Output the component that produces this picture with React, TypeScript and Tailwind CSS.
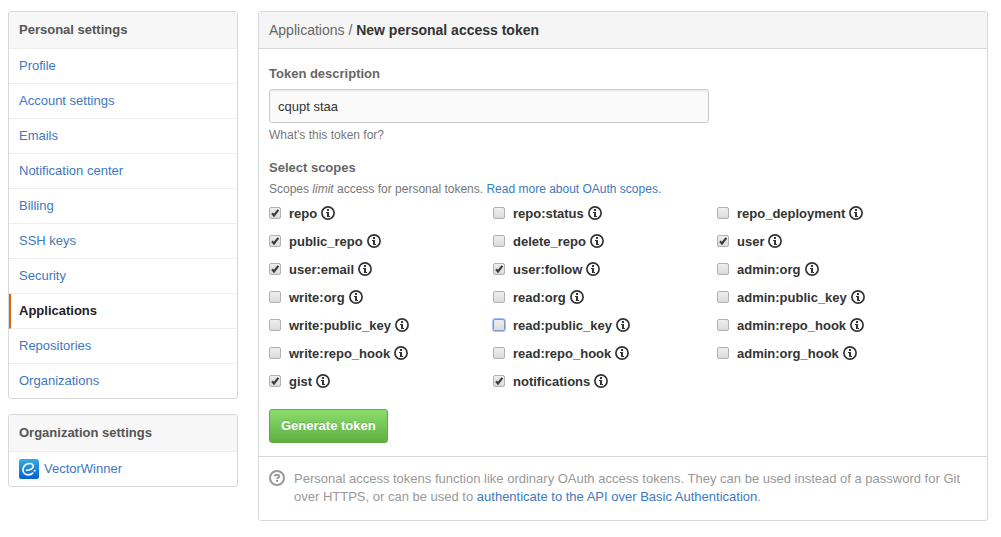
import React from "react";

type Scope = { name: string; checked?: boolean; focused?: boolean };

const scopes: Scope[] = [
  { name: "repo", checked: true },
  { name: "repo:status" },
  { name: "repo_deployment" },
  { name: "public_repo", checked: true },
  { name: "delete_repo" },
  { name: "user", checked: true },
  { name: "user:email", checked: true },
  { name: "user:follow", checked: true },
  { name: "admin:org" },
  { name: "write:org" },
  { name: "read:org" },
  { name: "admin:public_key" },
  { name: "write:public_key" },
  { name: "read:public_key", focused: true },
  { name: "admin:repo_hook" },
  { name: "write:repo_hook" },
  { name: "read:repo_hook" },
  { name: "admin:org_hook" },
  { name: "gist", checked: true },
  { name: "notifications", checked: true },
];

const personalLinks = [
  "Profile",
  "Account settings",
  "Emails",
  "Notification center",
  "Billing",
  "SSH keys",
  "Security",
  "Applications",
  "Repositories",
  "Organizations",
];

function InfoIcon() {
  return (
    <svg viewBox="0 0 14 14" className="size-3.5 shrink-0" aria-hidden="true">
      <circle cx="7" cy="7" r="6.1" fill="none" stroke="#333" strokeWidth="1.7" />
      <path fill="#333" d="M6 3h2v2H6zM5 6h3v4h1v1H6V7H5z" />
    </svg>
  );
}

function HelpIcon() {
  return (
    <svg viewBox="0 0 16 16" className="size-4 shrink-0" aria-hidden="true">
      <circle cx="8" cy="8" r="7" fill="none" stroke="#999" strokeWidth="2" />
      <path
        d="M5.600 6.300C5.800 5.200 6.700 4.800 8 4.800c1.400 0 2.200.6 2.200 1.500 0 1.300-2.100 1.300-2.100 2.700"
        fill="none"
        stroke="#999"
        strokeWidth="2"
      />
      <path fill="#999" d="M7 10h2v2H7z" />
    </svg>
  );
}

function OrgAvatar() {
  return (
    <svg viewBox="0 0 20 20" className="size-5 shrink-0" aria-hidden="true">
      <defs>
        <linearGradient id="avatar" x1="0" y1="0" x2="0" y2="1">
          <stop offset="0" stopColor="#38ace4" />
          <stop offset="1" stopColor="#0560d4" />
        </linearGradient>
      </defs>
      <rect width="20" height="20" rx="2.5" fill="url(#avatar)" />
      <path
        d="M7.500 11.300C10.500 11.300 14.300 9.800 14.300 7.300C14.300 5.500 12.600 4.500 10.300 4.500C6.800 4.500 4 7.400 4 10.700C4 13.900 6.300 15.900 9.300 15.900C11.100 15.900 12.600 15.300 13.700 14.200"
        fill="none"
        stroke="#fff"
        strokeWidth="1.7"
        strokeLinecap="round"
      />
      <circle cx="15.600" cy="11.800" r="1" fill="#fff" />
    </svg>
  );
}

function Menu({ title, children }: { title: string; children: React.ReactNode }) {
  return (
    <nav
      aria-label={title}
      className="divide-y divide-[#eee] overflow-hidden rounded-[3px] border border-[#d8d8d8] text-[13px]"
    >
      <h2 className="flex h-[37px] items-center bg-[#f7f7f7] px-2.5 font-bold text-[#555]">{title}</h2>
      {children}
    </nav>
  );
}

function ScopeItem({ scope }: { scope: Scope }) {
  return (
    <li className="flex h-5 items-center gap-1">
      <label className="flex items-center gap-2 text-[13px] font-bold text-[#333]">
        <span className="grid size-3 place-items-center">
          <input
            type="checkbox"
            defaultChecked={scope.checked}
            className={
              "peer col-start-1 row-start-1 size-3 appearance-none rounded-[2px] border bg-linear-to-b from-[#eee] to-[#dcdcdc] " +
              (scope.focused ? "border-[#8098c8] ring-1 ring-[#a5c3fa]" : "border-[#b0b0b0]")
            }
          />
          <svg
            viewBox="0 0 12 12"
            className="pointer-events-none invisible col-start-1 row-start-1 size-3 peer-checked:visible"
            aria-hidden="true"
          >
            <path d="M3 6.300l2 2.200 4.300-5.700" fill="none" stroke="#3c3c3c" strokeWidth="2.200" />
          </svg>
        </span>
        <span className="pt-0.5 leading-[18px]">{scope.name}</span>
      </label>
      <InfoIcon />
    </li>
  );
}

export default function App() {
  return (
    <div className="flex items-start gap-5 bg-white py-[11px] pr-[13px] pl-2 font-['Liberation_Sans',Arial,sans-serif] text-[13px] text-[#333]">
      <aside className="flex w-[230px] shrink-0 flex-col gap-[15px]">
        <Menu title="Personal settings">
          {personalLinks.map((link) => (
            <a
              key={link}
              href="#"
              className={
                link === "Applications"
                  ? "flex h-[35px] items-center border-l-2 border-l-[#d26911] pl-2 font-bold text-[#222]"
                  : "flex h-[35px] items-center px-2.5 text-[#4078c0] last:h-[34px]"
              }
            >
              {link}
            </a>
          ))}
        </Menu>
        <Menu title="Organization settings">
          <a href="#" className="flex h-[34px] items-center gap-[5px] px-2.5 text-[#4078c0]">
            <OrgAvatar />
            VectorWinner
          </a>
        </Menu>
      </aside>

      <main className="min-w-0 flex-1 overflow-hidden rounded-[3px] border border-[#d8d8d8]">
        <h1 className="flex h-[37px] items-center border-b border-[#d8d8d8] bg-[#f5f5f5] px-2.5 text-sm">
          <span className="whitespace-pre text-[#666]">Applications / </span>
          <span className="font-bold text-[#333]">New personal access token</span>
        </h1>

        <form className="px-2.5 pt-4 pb-[13px]" onSubmit={(e) => e.preventDefault()}>
          <label htmlFor="description" className="block leading-[18px] font-bold text-[#666]">
            Token description
          </label>
          <input
            id="description"
            type="text"
            defaultValue="cqupt staa"
            className="mt-1.5 block h-[34px] w-full max-w-[440px] rounded-[3px] border border-[#ccc] bg-[#fafafa] px-2 text-[13px] text-[#333] shadow-[inset_0_1px_2px_rgba(0,0,0,0.075)] outline-none"
          />
          <p className="mt-1 text-xs leading-4 text-[#777]">What's this token for?</p>

          <h2 className="mt-4 leading-[18px] font-bold text-[#666]">Select scopes</h2>
          <p className="mt-1 text-xs leading-4 text-[#777]">
            Scopes <em>limit</em> access for personal tokens.{" "}
            <a href="#" className="text-[#4078c0]">
              Read more about OAuth scopes.
            </a>
          </p>
          <ul className="mt-1.5 grid max-w-[672px] grid-cols-3 gap-y-2">
            {scopes.map((scope) => (
              <ScopeItem key={scope.name} scope={scope} />
            ))}
          </ul>
          <button
            type="submit"
            className="mt-[18px] h-[34px] rounded-[3px] border border-[#5ca941] bg-linear-to-b from-[#8add6d] to-[#60b044] px-[11px] text-[13px] font-bold text-white [text-shadow:0_-1px_0_rgba(0,0,0,0.15)]"
          >
            Generate token
          </button>
        </form>

        <div className="flex items-start gap-[9px] border-t border-[#d8d8d8] px-2.5 pt-[13px] pb-[14px] text-[#999]">
          <HelpIcon />
          <p className="leading-[18px]">
            Personal access tokens function like ordinary OAuth access tokens. They can be used instead of a password for
            Git over HTTPS, or can be used to{" "}
            <a href="#" className="text-[#4078c0]">
              authenticate to the API over Basic Authentication
            </a>
            .
          </p>
        </div>
      </main>
    </div>
  );
}
